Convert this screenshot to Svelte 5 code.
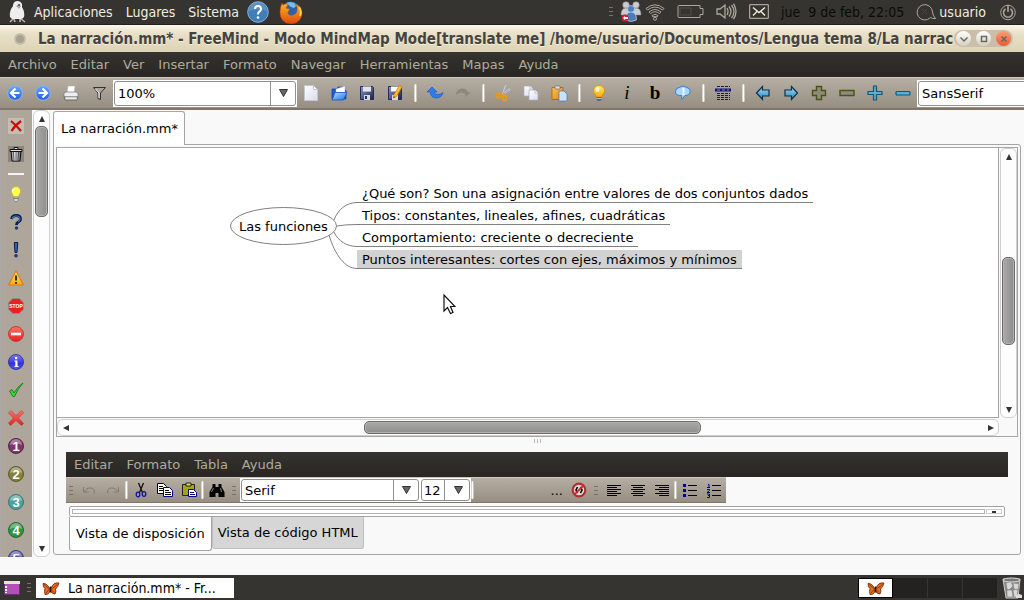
<script>
  const appMenus = ['Aplicaciones', 'Lugares', 'Sistema'];
  const menus = ['Archivo', 'Editar', 'Ver', 'Insertar', 'Formato', 'Navegar', 'Herramientas', 'Mapas', 'Ayuda'];
  const noteMenus = ['Editar', 'Formato', 'Tabla', 'Ayuda'];

  const navTools = [['back', 'Anterior'], ['forward', 'Siguiente'], ['print', 'Imprimir'], ['filter', 'Filtro']];
  const toolGroups = [
    [['file', 'Nuevo'], ['open', 'Abrir'], ['save', 'Guardar'], ['saveas', 'Guardar como']],
    [['undo', 'Deshacer'], ['redo', 'Rehacer']],
    [['cut', 'Cortar'], ['copy', 'Copiar'], ['paste', 'Pegar']],
    [['bulb', 'Idea'], ['italic', 'Cursiva'], ['bold', 'Negrita'], ['cloud', 'Nube']],
    [['grid', 'Atributos']],
    [['left', 'Izquierda'], ['right', 'Derecha'], ['plusGrey', 'Desplegar'], ['minusGrey', 'Plegar'], ['plusBlue', 'Desplegar todo'], ['minusBlue', 'Plegar todo']]
  ];
  const sideTop = [['remove', 'Quitar icono'], ['trash', 'Quitar todos']];
  const sideIcons = [
    ['lamp', 'Idea'], ['question', 'Pregunta'], ['exclaim', 'Importante'], ['warning', 'Aviso'], ['stop', 'Alto'],
    ['noentry', 'Prohibido'], ['info', 'Información'], ['check', 'Correcto'], ['cross', 'Incorrecto'],
    ['n1', 'Prioridad 1'], ['n2', 'Prioridad 2'], ['n3', 'Prioridad 3'], ['n4', 'Prioridad 4'], ['n5', 'Prioridad 5']
  ];
  const nodes = [
    { text: '¿Qué son? Son una asignación entre valores de dos conjuntos dados', y: 36 },
    { text: 'Tipos: constantes, lineales, afines, cuadráticas', y: 58 },
    { text: 'Comportamiento: creciente o decreciente', y: 80 },
    { text: 'Puntos interesantes: cortes con ejes, máximos y mínimos', y: 102 }
  ];
  let selected = $state(3);

  const ball = (n, c, d) =>
    `<circle cx="8" cy="8" r="7.5" fill="${c}" stroke="${d}"/><path d="M2 7a6 6 0 0 1 12 0q-6-3-12 0z" fill="#fff" opacity=".35"/><text x="8" y="12.5" text-anchor="middle" font-family="Liberation Sans" font-size="13" font-weight="bold" fill="#fff">${n}</text>`;
  const plus = 'M5.500 1.500h5v4h4v5h-4v4h-5v-4h-4v-5h4z';
  const rows = (list) => list.map(([x, w], i) => `<path d="M${x} ${3.5 + i * 2}h${w}" stroke="#000"/>`).join('');
  const sheet = (x, y) => `<path d="M${x} ${y}h6l3 3v7h-9z" fill="url(#paper)" stroke="#a9abc4" stroke-width=".7"/><path d="M${x + 6} ${y}v3h3" fill="#fff" stroke="#a9abc4" stroke-width=".7"/>`;

  const icons = {
    back: '<circle cx="8" cy="8" r="7.3" fill="url(#blue)" stroke="#8fb4ee"/><path d="M8.5 3.5 4 8l4.500 4.500M4.500 8h8" fill="none" stroke="#fff" stroke-width="2.200"/>',
    forward: '<circle cx="8" cy="8" r="7.3" fill="url(#blue)" stroke="#8fb4ee"/><path d="M7.500 3.500 12 8l-4.500 4.500M11.500 8h-8" fill="none" stroke="#fff" stroke-width="2.200"/>',
    print: '<path d="M5 1h7l-1 7H4z" fill="#fff" stroke="#bbb" stroke-width=".6"/><path d="M1 8l2-1h10l2 1v4H1z" fill="#eee" stroke="#777" stroke-width=".7"/><path d="M1 12h14l-1 3H2z" fill="#d7d7d7" stroke="#555" stroke-width=".7"/><path d="M3 13h10" stroke="#fff"/>',
    filter: '<path d="M2.500 2.500h12L9.500 8v6.500l-2.500-1V8z" fill="#aaa69e" stroke="#333"/><path d="M4.500 4L8 8v5" fill="none" stroke="#eee"/>',
    file: '<path d="M1.500.5h9l4 4v11h-13z" fill="url(#paper)" stroke="#c5c6d4"/><path d="M10.500.5v4h4z" fill="#fff" stroke="#c5c6d4"/>',
    open: '<path d="M1 4h5l1-2h5v3h3v9H1z" fill="#1c5ecb" stroke="#0d409d" stroke-width=".7"/><path d="M5 4l9-3v7H5z" fill="#fff" stroke="#9ab" stroke-width=".5"/><path d="M4 7.500h12L12.500 15H1z" fill="url(#sky)" stroke="#1554c4" stroke-width=".8"/>',
    save: '<path d="M1.500 1.500h12l1 1v12h-13z" fill="url(#navy)" stroke="#242c55"/><path d="M4 1.500h8v5H4z" fill="#fff"/><path d="M4 3h8M4 5h8" stroke="#bbb" stroke-width=".8"/><path d="M5 10h6v5H5z" fill="#d3d7e6"/><path d="M6 11h2v3H6z" fill="#243060"/>',
    saveas: '<path d="M1.500 1.500h12l1 1v12h-13z" fill="url(#navy)" stroke="#242c55"/><path d="M4 1.500h8v5H4z" fill="#fff"/><path d="M5 10h6v5H5z" fill="#d3d7e6"/><path d="M12.500.5l2.500 1.500-5.500 9.500-3 1.500.5-3.500z" fill="#ffb92c" stroke="#d8780b" stroke-width=".7"/><path d="M6.500 13l.3-1.700 1.200.7z" fill="#222"/>',
    undo: '<path d="M0 7l5-5 5 5H7q1 3 4 2.500 3 0 5-2-1 5.500-7 5.500-5 0-6-6z" fill="#2b7df0" stroke="#1754c6" stroke-width=".6"/>',
    redo: '<path d="M16 7.500L10.500 12V9.500Q6 6 1 10q0-6 6-6.500 5 0 6.500 4z" fill="#8d8880"/>',
    cut: '<path d="M11 .5L7.500 10M15 4L6 10.500" stroke="#c8cdd8" stroke-width="2"/><path d="M11.500 1L8 9.500M14.500 4.500L6 11" stroke="#777b88" stroke-width=".5"/><ellipse cx="4" cy="10.500" rx="3" ry="2" fill="none" stroke="#f09a0b" stroke-width="1.800"/><ellipse cx="9.500" cy="13" rx="2" ry="2.500" fill="none" stroke="#f09a0b" stroke-width="1.800"/>',
    copy: sheet(1, 1) + sheet(6, 5),
    paste: '<path d="M1 2.500h11v12H1z" fill="url(#orange)" stroke="#b15d05" stroke-width=".8"/><path d="M4 1h5v3H4z" fill="#ddd" stroke="#666" stroke-width=".6"/><path d="M8 6h5l3 3v7H8z" fill="#c9e3ff" stroke="#3c79c9" stroke-width=".7"/>',
    bulb: '<path d="M8 .5a5.300 5.300 0 0 1 5.500 5.300c0 2.400-2 3.200-2.500 6.200H5C4.500 9 2.500 8.200 2.500 5.800A5.300 5.300 0 0 1 8 .5z" fill="url(#gold)" stroke="#e08a00" stroke-width=".8"/><ellipse cx="6.500" cy="4.500" rx="2" ry="2.500" fill="#fff" opacity=".75"/><path d="M5.500 12h5v2.500l-1 1.500h-3l-1-1.500z" fill="#667"/><path d="M5.500 13.500h5" stroke="#ddd" stroke-width=".7"/>',
    italic: '<text x="8" y="14" text-anchor="middle" font-family="Liberation Serif" font-size="19" font-style="italic">i</text>',
    bold: '<text x="8" y="14" text-anchor="middle" font-family="Liberation Serif" font-size="19" font-weight="bold">b</text>',
    cloud: '<path d="M4 2.500q4-3 8 0 4 1 3 4 0 4-5 4l-3 4-.5-4Q0 11 .5 6 1 3 4 2.500z" fill="#a9d8ff" stroke="#3a7bd0"/><path d="M7.500 3h2v4.500h-2zM7.500 8.300h2V10h-2z" fill="#fff"/>',
    grid: '<path d="M2 1.500h13M2 8.500h13M2 10.500h13M2 12.500h13M2 14.500h13" stroke="#222" stroke-dasharray="3 1"/><path d="M0 3.500h16v3H0z" fill="#12128c"/><path d="M2 5h3M7 5h3M12 5h2" stroke="#88a"/>',
    left: '<path d="M1.500 8l6-6.500V5H14v6H7.500v3.500z" fill="url(#teal)" stroke="#0b2f4c" stroke-width="1.200"/>',
    right: '<path d="M14.500 8l-6-6.500V5H2v6h6.500v3.500z" fill="url(#teal)" stroke="#0b2f4c" stroke-width="1.200"/>',
    plusGrey: `<path d="${plus}" fill="#8d8c7c" stroke="#4c5212" stroke-width="1.400"/>`,
    minusGrey: '<path d="M1 5.500h14v5H1z" fill="#8d8c7c" stroke="#4c5212" stroke-width="1.400"/>',
    plusBlue: '<path d="M6.500 1h3v5.500H15v3H9.500V15h-3V9.500H1v-3h5.500z" fill="#5bb0d4" stroke="#12566f" stroke-width="1.200" stroke-linejoin="round"/>',
    minusBlue: '<rect x="1" y="6.500" width="14" height="3.500" rx="1" fill="#5bb0d4" stroke="#12566f" stroke-width="1.200"/>',
    remove: '<path d="M0 0h16v16H0z" fill="#c2bdb5"/><path d="M3 3q5 4 10 10M13 3Q7 7 3.500 13" fill="none" stroke="#d50000" stroke-width="2.200"/>',
    trash: '<path d="M0 0h16v16H0z" fill="#8b867c"/><path d="M3 5h10l-1 10H4z" fill="url(#metal)" stroke="#111"/><path d="M2 3.500h12v2H2zM6 3V1.500h4V3" fill="#ddd" stroke="#111"/><path d="M5.500 6l.5 8M8 6v8M10.500 6l-.5 8" stroke="#333" stroke-width=".8"/>',
    lamp: '<path d="M8 .5a4.700 4.700 0 0 1 4.700 4.700C12.700 7.500 11 8 10.500 11h-5C5 8 3.300 7.500 3.300 5.200A4.700 4.700 0 0 1 8 .5z" fill="#ffff54" stroke="#b5b13c" stroke-width=".8"/><path d="M6 2.500q-1.500 1-1.500 3" stroke="#fff" fill="none" stroke-width="1.500"/><path d="M5.800 11h4.400v3L9 15.500H7L5.800 14z" fill="#ddd" stroke="#777" stroke-width=".7"/><path d="M6 12.500h4" stroke="#666" stroke-width=".8"/>',
    question: '<path d="M3.500 5Q4 1.500 8.200 1.500T12.500 5Q12.500 7 10 8.200 8.500 9 8.500 11" fill="none" stroke="#0b1c4a" stroke-width="2.800"/><path d="M4 4.500Q5 2 8 2q4 0 4 3 0 1.500-2 3" fill="none" stroke="#3e70bb" stroke-width="1.200"/><circle cx="8.500" cy="14" r="1.700" fill="#183982"/>',
    exclaim: '<path d="M6.300.5h3.500l-.8 10H7z" fill="#3265ad" stroke="#0b1c4a"/><circle cx="8" cy="13.800" r="1.800" fill="#183982"/>',
    warning: '<path d="M8 1l7.500 14H.5z" fill="url(#gold)" stroke="#e27c18" stroke-width="1.200" stroke-linejoin="round"/><path d="M8 5.500v5M8 12v1.800" stroke="#222" stroke-width="1.800"/>',
    stop: '<path d="M4.800.5h6.400l4.300 4.300v6.400l-4.300 4.300H4.800L.5 11.200V4.800z" fill="#ec1f22" stroke="#8f8a86"/><text x="8" y="10" text-anchor="middle" font-family="Liberation Sans" font-size="5" font-weight="bold" fill="#fff">STOP</text>',
    noentry: '<circle cx="8" cy="8" r="7.500" fill="url(#red)" stroke="#c23c3c"/><path d="M3 6.700h10v2.600H3z" fill="#fff"/>',
    info: '<circle cx="8" cy="8" r="7.500" fill="url(#indigo)" stroke="#3a3a96"/><path d="M6.500 6.500h3V12h1v1h-4v-1h.8V7.500h-.8zM7 3h2.200v2.200H7z" fill="#fff"/>',
    check: '<path d="M1.500 9l2.500-1.500 2 3.500Q9.500 4.500 15 1 9.500 7 6.500 14.500H5z" fill="#39dc39" stroke="#187a18" stroke-width=".9"/>',
    cross: '<path d="M3 .5L8 5.500 13.500.5l2 2.500-5 5 5 5.500-2 2L8 10.500l-5.500 5L.5 13l5-5L.5 3z" fill="url(#red)" stroke="#9d4040" stroke-width=".6"/>',
    n1: ball(1, '#803567', '#53244a'),
    n2: ball(2, '#85803a', '#5d5a2c'),
    n3: ball(3, '#4da09f', '#3b7676'),
    n4: ball(4, '#2f9440', '#286a32'),
    n5: ball(5, '#5757ac', '#3f3f80'),
    eUndo: '<path d="M2.500 5v5h5M3 9.500q4-5 9-3 2.500 2 1 5" fill="none" stroke="#7f7a72"/>',
    eRedo: '<path d="M13.500 5v5h-5M13 9.500q-4-5-9-3-2.500 2-1 5" fill="none" stroke="#7f7a72"/>',
    eCut: '<path d="M5.500 1l4 9.500M10.500 1l-4 9.500" stroke="#111" stroke-width="1.300"/><ellipse cx="5" cy="12.500" rx="1.800" ry="2.300" fill="none" stroke="#1212a0" stroke-width="1.300"/><ellipse cx="11" cy="12" rx="1.800" ry="2.300" fill="none" stroke="#1212a0" stroke-width="1.300"/>',
    eCopy: '<path d="M.5 1.500h6l3 3v7h-9z" fill="#fff" stroke="#000"/><path d="M2 4.500h4M2 6.500h5M2 8.500h4" stroke="#000"/><path d="M6.500 5.500h6l3 3v6h-9z" fill="#fff" stroke="#00007c"/><path d="M8 8.500h4M8 10.500h6M8 12.500h6" stroke="#000"/>',
    ePaste: '<path d="M1.500 2.500h12v11h-12z" fill="#a8a216" stroke="#222"/><path d="M5 1h5v3H5z" fill="#e3df5d" stroke="#222"/><path d="M7.500 7.500h5l3 3v4h-8z" fill="#fff" stroke="#00007c"/><path d="M9 10.500h4M9 12.500h5" stroke="#00007c"/>',
    eFind: '<path d="M3.500 2h3v3h3V2h3v3l3 5v5h-6v-4h-3v4h-6v-5l3-5z" fill="#000"/><path d="M4.500 6L2.500 10M11.500 6l1 4" stroke="#aaa" stroke-width=".8"/>',
    eNone: '<circle cx="8" cy="8" r="6.300" fill="#ddd" stroke="#b92c30" stroke-width="2.200"/><path d="M6.500 5L5 8l1.500 3M9.500 5L11 8l-1.500 3" fill="none" stroke="#000" stroke-width="1.600"/><path d="M3.500 12.500l9-9" stroke="#d22c30" stroke-width="2"/>',
    alignL: rows([[1, 14], [1, 10], [1, 14], [1, 10], [1, 14], [1, 10]]),
    alignC: rows([[1, 14], [3, 10], [1, 14], [3, 10], [1, 14], [3, 10]]),
    alignR: rows([[1, 14], [5, 10], [1, 14], [5, 10], [1, 14], [5, 10]]),
    bullets: '<path d="M1 2h3v3H1zM1 7h3v3H1zM1 12h3v3H1z" fill="#00008c"/><path d="M6 3.500h9M6 8.500h9M6 13.500h9" stroke="#000"/>',
    numbers: '<path d="M2 2.500h1V5M1 5.500h3M1 7.500h2.500v1L1 10.500h3M1 12h2.500v3.500H1M2 13.500h2" fill="none" stroke="#00008c"/><path d="M6 3.500h9M6 8.500h9M6 13.500h9" stroke="#000"/>',
    butterfly: '<path d="M7 9Q4 3 0 3.500q0 4 2 5Q1 11 2 14.500q4 .5 5-4 2 3.500 5 3.500 1.500-2 .5-5Q15 7 16 3q-6-1-8 5.500z" fill="#ec6a1b" stroke="#5c2408" stroke-width=".8"/><path d="M1 4.500L6.500 9M14.500 4.500L8.500 9M3 13l3.500-4M11 12.500L8 9.500" stroke="#8b330a" stroke-width=".8"/><path d="M7.500 6.500v6" stroke="#29160c" stroke-width="1.500"/>'
  };
</script>

{#snippet icon(name)}
  <svg class="icon" viewBox="0 0 16 16" aria-hidden="true">{@html icons[name]}</svg>
{/snippet}

{#snippet tools(list)}
  {#each list as [name, label]}
    <button class="tool" aria-label={label}>{@render icon(name)}</button>
  {/each}
{/snippet}

{#snippet combo(label, value, kind)}
  <span class="combo {kind}">
    <select aria-label={label}><option>{value}</option></select>
    <svg class="drop" viewBox="0 0 9 8" aria-hidden="true"><path d="M.5.5h8L4.500 7.500z" fill="#666" stroke="#333" /></svg>
  </span>
{/snippet}

{#snippet grip()}<span class="grip"></span>{/snippet}

{#snippet arrow(dir)}
  <button class="arrow {dir}" aria-label="Desplazar"><svg viewBox="0 0 6 6" aria-hidden="true"><path d="M3 0l3 6H0z" fill="#333" /></svg></button>
{/snippet}

<svg class="defs" aria-hidden="true">
  <defs>
    <linearGradient id="paper" x2="1" y2="1"><stop stop-color="#fff" /><stop offset="1" stop-color="#d9dbea" /></linearGradient>
    <linearGradient id="blue" x2="0" y2="1"><stop stop-color="#6fa5ff" /><stop offset="1" stop-color="#1e5ee0" /></linearGradient>
    <linearGradient id="sky" x2="1" y2="1"><stop stop-color="#b9e0ff" /><stop offset="1" stop-color="#1c6ce8" /></linearGradient>
    <linearGradient id="navy" x2="1" y2="1"><stop stop-color="#8e9ac9" /><stop offset="1" stop-color="#182047" /></linearGradient>
    <linearGradient id="orange" x2="1" y2="1"><stop stop-color="#ffc356" /><stop offset="1" stop-color="#e58208" /></linearGradient>
    <linearGradient id="gold" x2="0" y2="1"><stop stop-color="#fff06a" /><stop offset="1" stop-color="#fba60e" /></linearGradient>
    <linearGradient id="teal" x2="0" y2="1"><stop stop-color="#a4e2fa" /><stop offset="1" stop-color="#1f84bb" /></linearGradient>
    <linearGradient id="metal"><stop stop-color="#777" /><stop offset=".4" stop-color="#fff" /><stop offset="1" stop-color="#555" /></linearGradient>
    <linearGradient id="red" x2="0" y2="1"><stop stop-color="#ff7468" /><stop offset="1" stop-color="#e81e1e" /></linearGradient>
    <linearGradient id="indigo" x2="0" y2="1"><stop stop-color="#8080f2" /><stop offset=".6" stop-color="#3030e4" /><stop offset="1" stop-color="#5b5bf8" /></linearGradient>
    <linearGradient id="fox" x2="0" y2="1"><stop stop-color="#ffb52c" /><stop offset="1" stop-color="#dc4a0b" /></linearGradient>
  </defs>
</svg>

<div class="desktop">
  <header class="panel">
    <svg class="logo" viewBox="0 0 18 22" aria-hidden="true"><path d="M5 5Q5 0 10 0q5 1 4 6 3 5 2 10l-2 2H4l-2-2Q1 10 5 5z" fill="#eee" /><path d="M8 5l3-2 2 2-2 3z" fill="#aaa" /><circle cx="11" cy="4" r="1" fill="#444" /><path d="M5 18l-3 3M6 18l1 3M12 18v3M13 18l4 3" stroke="#bbb" stroke-width="1.500" /></svg>
    <nav class="appmenus">{#each appMenus as m}<button>{m}</button>{/each}</nav>
    <button class="launcher" aria-label="Ayuda"><svg viewBox="0 0 22 22" aria-hidden="true"><circle cx="11" cy="11" r="10.300" fill="#417db8" stroke="#7fb0dd" /><path d="M2 10a9 9 0 0 1 18 0q-9-3-18 0z" fill="#fff" opacity=".15" /><path d="M8 8q0-3 3-3t3 3q0 1.500-1.700 2.700Q11 11.500 11 13.500" fill="none" stroke="#fff" stroke-width="2" /><circle cx="11" cy="16.500" r="1.300" fill="#fff" /></svg></button>
    <button class="launcher fox" aria-label="Firefox"><svg viewBox="0 0 24 24" aria-hidden="true"><circle cx="12" cy="11" r="9.500" fill="#2466ae" /><path d="M7 3q6-3 11 2l-3 3-3-1z" fill="#7ab9ec" /><path d="M3 3l1 2q3-2 5-1 0 2-2 4l4 1-2 3q0 4 5 3 4-1 4-5 1-3-2-6 6 2 7 8 0 11-11 12Q1 23 1 12q0-5 2-9z" fill="url(#fox)" stroke="#b93c06" stroke-width=".5" /><path d="M20 7q3 4 1 9" stroke="#ffd24a" stroke-width="2" fill="none" /></svg></button>
    <div class="tray">
      <span class="pair">
        {@render grip()}
        <svg width="22" height="22" viewBox="0 0 22 22" aria-hidden="true"><g fill="#c9ccd0" stroke="#888" stroke-width=".6"><circle cx="6" cy="4" r="3.300" /><path d="M1 14q0-7 5-7t5 7z" /><circle cx="16" cy="4" r="3.300" /><path d="M11 14q0-7 5-7t5 7z" /></g><g fill="#4c7dbb" stroke="#dce6f2" stroke-width=".6"><circle cx="11" cy="8" r="3.500" /><path d="M5.500 19q0-8 5.500-8t5.500 8q-5 3-11 0z" /></g><circle cx="5" cy="17" r="3.500" fill="#d11f35" /><path d="M3 17l2-2v4zM5 16h3v2H5z" fill="#fff" /></svg>
        <svg width="20" height="18" viewBox="0 0 20 18" fill="none" stroke="#aaa79b" aria-hidden="true"><path d="M1 5.500Q10-2 19 5.500L17.500 7Q10 1 2.500 7zM4 9q6-5 12 0l-1.500 1.500q-4.500-3.500-9 0zM7 12.500q3-2.500 6 0l-1 1.500q-2-1-4 0z" /><circle cx="10" cy="15.800" r="1.500" /></svg>
      </span>
      <svg width="27" height="15" viewBox="0 0 27 15" fill="none" stroke="#aaa79b" aria-hidden="true"><path d="M2 1.500h21v3h3v6h-3v3H2q-1 0-1-1v-10q0-1 1-1z" /><path d="M3 4h11v7H3z" stroke="#504e48" /></svg>
      <svg width="21" height="17" viewBox="0 0 21 17" fill="none" stroke="#aaa79b" aria-hidden="true"><path d="M1 6h3l5-4v13l-5-4H1zM11 5q2 3.500 0 7M13 3.500q4 5 0 10M15.500 2q5 6.500 0 13M17.500.7q5 8 0 15.500" stroke-width="1.300" /></svg>
      <svg width="20" height="15" viewBox="0 0 20 15" fill="none" stroke="#c2bfb2" aria-hidden="true"><path d="M.7.700h18.600v13.600H.7z" /><path d="M4 3.500l6 5 6-5M4 11.500l4-4M16 11.500l-4-4" stroke="#eeeadc" stroke-width="1.400" /></svg>
      <time>jue  9 de feb, 22:05</time>
      <span class="pair user">
        <svg width="20" height="18" viewBox="0 0 20 18" fill="none" stroke="#aaa79b" aria-hidden="true"><path d="M14.500 14.500A7.700 7.700 0 1 1 16.500 9q0 3 3 6.500-3 .5-5-1z" /><path d="M6 6l5 5M11 6l-5 5" stroke="#555" stroke-dasharray="1 1" /></svg>
        <button>usuario</button>
      </span>
      <button class="power" aria-label="Apagar"><svg width="16" height="18" viewBox="0 0 16 18" fill="none" stroke="#aaa79b" aria-hidden="true"><circle cx="8" cy="9.500" r="7.300" /><path d="M5.500 6a4.500 4.500 0 1 0 5 0M8 2v7" stroke-width="1.600" /></svg></button>
    </div>
  </header>

  <div class="title">
    <span class="dot"></span>
    <h1>La narración.mm* - FreeMind - Modo MindMap Mode[translate me] /home/usuario/Documentos/Lengua tema 8/La narrac</h1>
    <div class="wbuttons">
      <button aria-label="Minimizar"><svg viewBox="0 0 10 10" aria-hidden="true"><path d="M1.500 3.500L5 7l3.500-3.500" /></svg></button>
      <button aria-label="Maximizar"><svg viewBox="0 0 10 10" aria-hidden="true"><path d="M2.500 2.500h5v5h-5z" /></svg></button>
      <button class="close" aria-label="Cerrar"><svg viewBox="0 0 10 10" aria-hidden="true"><path d="M2.500 2.500l5 5M7.500 2.500l-5 5" /></svg></button>
    </div>
  </div>

  <nav class="menubar">{#each menus as m}<button>{m}</button>{/each}</nav>

  <div class="toolbar">
    {@render tools(navTools)}
    {@render combo('Zoom', '100%', 'zoom')}
    {#each toolGroups as group, i}
      {#if i}<span class="sep"></span>{/if}
      {@render tools(group)}
    {/each}
    {@render combo('Fuente', 'SansSerif', 'font')}
  </div>

  <main class="work">
    <aside class="sidebar">
      {@render tools(sideTop)}
      <span class="hsep"></span>
      {@render tools(sideIcons)}
    </aside>
    <div class="vscroll side">
      {@render arrow('up')}
      <div class="track"><span class="thumb"></span></div>
      {@render arrow('down')}
    </div>

    <section class="content">
      <button class="doctab">La narración.mm*</button>
      <div class="pane">
        <div class="view">
          <div class="canvas">
            <svg class="edges" width="760" height="130" viewBox="0 0 760 130" fill="none" stroke="#808080" aria-hidden="true">
              <ellipse cx="226.500" cy="78" rx="53" ry="18.500" />
              <path d="M277 72C281 61 290 54.500 300 54.500M280 78Q288 76.500 300 76.500M277 84C281 93 290 98.500 300 98.500M272 87C278 107 288 120.500 300 120.500" />
            </svg>
            <span class="rootnode">Las funciones</span>
            {#each nodes as n, i}
              <button class="node" class:selected={selected === i} style:top="{n.y}px" onclick={() => (selected = i)}>{n.text}</button>
            {/each}
            <svg class="pointer" width="13" height="21" viewBox="0 0 13 21" aria-hidden="true"><path d="M1 1v16l3.500-3.500 3 6 2.500-1-2.500-6H12z" fill="#fff" stroke="#111" stroke-width="1.200" /></svg>
          </div>
          <div class="vscroll map">
            {@render arrow('up')}
            <div class="track"><span class="thumb"></span></div>
            {@render arrow('down')}
          </div>
          <div class="hscroll">
            {@render arrow('prev')}
            <div class="track"><span class="thumb"></span></div>
            {@render arrow('next')}
          </div>
        </div>
        <div class="splitter"><i></i><i></i><i></i></div>

        <div class="editor">
          <nav class="menubar">{#each noteMenus as m}<button>{m}</button>{/each}</nav>
          <div class="toolbar small">
            {@render grip()}
            {@render tools([['eUndo', 'Deshacer'], ['eRedo', 'Rehacer']])}
            <span class="sep"></span>
            {@render tools([['eCut', 'Cortar'], ['eCopy', 'Copiar'], ['ePaste', 'Pegar']])}
            <span class="sep"></span>
            {@render tools([['eFind', 'Buscar']])}
            {@render grip()}
            {@render combo('Tipo de letra', 'Serif', 'face')}
            {@render combo('Tamaño', '12', 'size')}
            <span class="sep"></span>
            <button class="more">...</button>
            {@render tools([['eNone', 'Sin enlace']])}
            {@render grip()}
            {@render tools([['alignL', 'Izquierda'], ['alignC', 'Centro'], ['alignR', 'Derecha']])}
            <span class="sep"></span>
            {@render tools([['bullets', 'Viñetas'], ['numbers', 'Numeración']])}
          </div>
          <div class="strip"><span></span><b></b></div>
          <div class="viewtabs">
            <button class="on">Vista de disposición</button>
            <button>Vista de código HTML</button>
          </div>
        </div>
      </div>
    </section>
  </main>

  <footer class="taskbar">
    <button class="show" aria-label="Mostrar el escritorio"><svg width="16" height="16" viewBox="0 0 16 16" aria-hidden="true"><path d="M.5 1.500h15v13H.5z" fill="#b34fb5" stroke="#6e2c72" /><path d="M0 1h16v3H0z" fill="#e8e4d4" /><path d="M2 6v7" stroke="#fff" stroke-width="2" stroke-dasharray="2 1" /></svg></button>
    {@render grip()}
    <button class="task">{@render icon('butterfly')}<span>La narración.mm* - Fr...</span></button>
    <div class="pager">
      <button class="current" aria-label="Área 1">{@render icon('butterfly')}</button>
      <button aria-label="Área 2"></button>
      <button aria-label="Área 3"></button>
      <button aria-label="Área 4"></button>
    </div>
    <button class="bin" aria-label="Papelera"><svg width="20" height="22" viewBox="0 0 20 22" aria-hidden="true"><path d="M1 2h17l-2 19H4z" fill="#888" stroke="#ccc" /><path d="M4 6l5-1 2 4-4 4-2-1zM11 6l6 1-1 6-4-1zM5 13l5 0 1 7H5zM11 13l5-1-1 8-3 0z" fill="#d8d8d8" stroke="#777" stroke-width=".5" /><ellipse cx="9.500" cy="3" rx="8.500" ry="2" fill="#777" stroke="#ddd" /><path d="M14 18l3-1 3 1v3h-6z" fill="#ddd" /></svg></button>
  </footer>
</div>

<style>
  :global(body) {
    margin: 0;
  }
  .desktop {
    display: flex;
    flex-direction: column;
    height: 100vh;
    overflow: hidden;
    background: #f9f9f9;
    font-family: 'DejaVu Sans', sans-serif;
    font-size: 13px;
    color: #000;
  }
  .defs {
    position: absolute;
    width: 0;
    height: 0;
  }
  button {
    margin: 0;
    padding: 0;
    border: 0;
    background: none;
    color: inherit;
    font: inherit;
    white-space: nowrap;
  }
  svg {
    display: block;
    flex: none;
  }
  .icon {
    width: 16px;
    height: 16px;
    overflow: visible;
  }

  .panel {
    display: flex;
    align-items: center;
    flex: none;
    box-sizing: border-box;
    height: 25px;
    padding: 0 8px 1px;
    border-bottom: 1px solid #23211f;
    background: #353430;
    color: #f0ede0;
    font-family: 'DejaVu Sans Condensed', sans-serif;
    font-size: 14px;
    line-height: 16px;
  }
  .logo {
    width: 18px;
    height: 22px;
  }
  .appmenus {
    display: flex;
    gap: 13px;
    margin: 0 8px;
  }
  .launcher svg {
    width: 22px;
    height: 22px;
  }
  .fox {
    margin-left: 10px;
  }
  .fox svg {
    width: 24px;
    height: 24px;
  }
  .tray {
    display: flex;
    align-items: center;
    gap: 12px;
    margin-left: auto;
  }
  .pair {
    display: flex;
    align-items: center;
    gap: 3px;
  }
  .user {
    padding-right: 2px;
  }
  time {
    color: #0b0b0a;
    white-space: pre;
  }

  .title {
    display: flex;
    align-items: center;
    flex: none;
    height: 27px;
    padding: 0 11px 0 14px;
    background: linear-gradient(#fbf8ec, #e9e1c8 30%, #ddd4b6);
  }
  .dot {
    flex: none;
    width: 8px;
    height: 8px;
    border: 2px solid #c6bea8;
    border-radius: 50%;
    background: #a7a193;
  }
  h1 {
    flex: 1;
    min-width: 0;
    margin: 0 0 0 12px;
    overflow: hidden;
    color: #45433f;
    font-family: 'DejaVu Sans Condensed', sans-serif;
    font-size: 15px;
    font-weight: bold;
    white-space: nowrap;
    text-shadow: 0 1px #f6f1de;
  }
  .wbuttons {
    display: flex;
    gap: 5px;
    padding: 1px 2px;
    border-radius: 10px;
    background: #c9bfa9;
  }
  .wbuttons button {
    display: grid;
    place-items: center;
    width: 15px;
    height: 15px;
    border-radius: 50%;
    background: linear-gradient(#fff, #d5cec0);
  }
  .wbuttons svg {
    width: 10px;
    height: 10px;
    fill: none;
    stroke: #6e675b;
    stroke-width: 1.5;
  }
  .wbuttons .close {
    background: linear-gradient(#ff9d78, #e95a2e);
  }

  .menubar {
    display: flex;
    align-items: center;
    gap: 14px;
    flex: none;
    height: 25px;
    padding: 0 8px;
    background: linear-gradient(#353430, #282523);
    color: #aeab9d;
  }

  .toolbar {
    display: flex;
    align-items: center;
    flex: none;
    height: 30px;
    padding-left: 1px;
    overflow: hidden;
    border-top: 1px solid #cbc5bc;
    border-bottom: 2px solid #80776a;
    background: linear-gradient(#b5aea3, #978e81);
  }
  .tool {
    display: grid;
    place-items: center;
    flex: none;
    width: 28px;
    height: 28px;
  }
  .sep {
    flex: none;
    width: 3px;
    height: 18px;
    margin: 0 4px 0 5px;
    border-radius: 2px;
    background: linear-gradient(90deg, #c8c2b8, #fff, #b0a99e);
  }
  .combo {
    display: grid;
    grid-template-columns: 1fr 26px;
    align-items: center;
    flex: none;
    box-sizing: border-box;
    height: 27px;
    padding: 1px;
    background: #fff;
  }
  .combo select {
    grid-area: 1 / 1 / 2 / 3;
    width: 100%;
    height: 25px;
    padding: 0 3px;
    border: 1px solid #92908c;
    border-radius: 3px;
    outline: 0;
    background: linear-gradient(90deg, transparent calc(100% - 25px), #92908c calc(100% - 25px), #92908c calc(100% - 24px), transparent calc(100% - 24px));
    color: #000;
    font: inherit;
    appearance: none;
  }
  .drop {
    grid-area: 1 / 2;
    justify-self: center;
    width: 9px;
    height: 8px;
    pointer-events: none;
  }
  .zoom {
    width: 184px;
  }
  .font {
    width: 184px;
  }

  .work {
    display: flex;
    flex: 1;
    min-height: 0;
    padding-bottom: 18px;
  }
  .sidebar {
    display: flex;
    flex-direction: column;
    align-items: center;
    flex: none;
    width: 32px;
    padding-top: 2px;
    overflow: hidden;
    background: #aea69a;
    box-shadow: inset 1px 0 #aaa;
  }
  .hsep {
    flex: none;
    width: 16px;
    height: 2px;
    margin: 5px 0;
    background: #f5f3f0;
  }

  .vscroll,
  .hscroll {
    display: flex;
    box-sizing: border-box;
    border: 1px solid #cfcfcf;
    border-radius: 6px;
    background: #fdfdfd;
  }
  .vscroll {
    flex-direction: column;
    width: 17px;
  }
  .side {
    margin: 0 3px 0 1px;
  }
  .track {
    flex: 1;
    display: flex;
    min-width: 0;
    min-height: 0;
  }
  .vscroll .track {
    flex-direction: column;
    padding: 0 1px;
  }
  .hscroll .track {
    padding: 1px 0;
  }
  .thumb {
    box-sizing: border-box;
    border: 1px solid #6f6b60;
    border-radius: 5px;
    background: linear-gradient(90deg, #a9a9a9, #8e8e8e);
    box-shadow: inset 0 0 0 1px #b2b2b2;
  }
  .side .thumb {
    height: 22%;
  }
  .map .thumb {
    height: 37%;
    margin-top: 93px;
  }
  .hscroll .thumb {
    width: 37%;
    margin-left: 32%;
    background: linear-gradient(#a9a9a9, #8e8e8e);
  }
  .arrow {
    display: grid;
    place-items: center;
    flex: none;
    width: 15px;
    height: 15px;
  }
  .arrow svg {
    width: 6px;
    height: 6px;
  }
  .down svg {
    transform: rotate(180deg);
  }
  .prev svg {
    transform: rotate(-90deg);
  }
  .next svg {
    transform: rotate(90deg);
  }

  .content {
    display: flex;
    flex-direction: column;
    flex: 1;
    min-width: 0;
    padding: 1px 3px 2px 0;
  }
  .doctab {
    align-self: flex-start;
    z-index: 1;
    height: 34px;
    margin-bottom: -1px;
    padding: 0 6px 0 7px;
    border: 1px solid #a5a5a5;
    border-bottom: 0;
    border-radius: 3px 3px 0 0;
    background: #fff;
  }
  .pane {
    display: flex;
    flex-direction: column;
    flex: 1;
    min-height: 0;
    padding: 2px;
    border: 1px solid #a5a5a5;
    border-radius: 0 3px 3px 3px;
  }
  .view {
    display: grid;
    grid-template-columns: 1fr 17px;
    grid-template-rows: 1fr 17px;
    gap: 1px;
    flex: 1;
    min-height: 0;
    border: 1px solid #a5a5a5;
  }
  .canvas {
    position: relative;
    min-width: 0;
    overflow: hidden;
    border-right: 1px solid #a5a5a5;
    border-bottom: 1px solid #a5a5a5;
    background: #fff;
  }
  .edges {
    position: absolute;
    top: 0;
    left: 0;
  }
  .rootnode {
    position: absolute;
    top: 71px;
    left: 182px;
    line-height: 16px;
  }
  .node {
    position: absolute;
    left: 300px;
    height: 19px;
    padding: 1px 5px 0;
    border-bottom: 1px solid #808080;
    line-height: 18px;
  }
  .selected {
    background: #d2d2d2;
  }
  .pointer {
    position: absolute;
    top: 146px;
    left: 386px;
  }
  .splitter {
    display: flex;
    justify-content: center;
    gap: 2px;
    flex: none;
    height: 13px;
    padding-top: 2px;
  }
  .splitter i {
    width: 1px;
    height: 4px;
    background: #bbb;
  }

  .editor {
    flex: none;
    padding: 0 10px 1px;
  }
  .small {
    width: fit-content;
    max-width: 100%;
    height: 24px;
    padding: 0;
    border-bottom-width: 1px;
  }
  .small .tool {
    width: 24px;
    height: 24px;
  }
  .small .sep {
    margin: 0 1px 0 0;
  }
  .small .combo {
    height: 24px;
  }
  .small select {
    height: 22px;
  }
  .face {
    width: 180px;
  }
  .size {
    width: 51px;
  }
  .size select {
    padding: 0 2px;
  }
  .small .size {
    grid-template-columns: 1fr 24px;
  }
  .more {
    flex: none;
    width: 92px;
    padding-right: 4px;
    text-align: right;
  }
  .grip {
    flex: none;
    width: 4px;
    height: 9px;
    margin: 0 4px 0 3px;
    background: repeating-linear-gradient(#77716a 0 1px, transparent 1px 4px);
  }
  .strip {
    display: flex;
    height: 5px;
    margin: 3px 3px 0;
    padding: 2px;
    border: 1px solid #a5a5a5;
    border-radius: 2px;
    background: #fff;
  }
  .strip span {
    flex: 1;
    border: 1px solid #b2b2b2;
  }
  .strip b {
    width: 14px;
    margin-left: 1px;
    border: 1px solid #ccc;
    background: linear-gradient(#333, #333) center / 4px 2px no-repeat;
  }
  .viewtabs {
    display: flex;
    align-items: flex-start;
    padding-left: 3px;
  }
  .viewtabs button {
    height: 32px;
    padding: 0 5px;
    border: 1px solid #c0c0c0;
    border-top: 0;
    border-radius: 0 0 3px 3px;
    background: #d6d6d6;
  }
  .viewtabs .on {
    height: 34px;
    padding: 0 6px;
    border-color: #a5a5a5;
    background: #fff;
  }

  .taskbar {
    display: flex;
    align-items: center;
    flex: none;
    height: 25px;
    padding: 0 2px 0 4px;
    background: #353430;
  }
  .taskbar .grip {
    margin: 0 5px 0 7px;
  }
  .task {
    display: flex;
    align-items: center;
    gap: 9px;
    box-sizing: border-box;
    width: 198px;
    height: 20px;
    padding: 0 7px;
    background: #fff;
    font-family: 'DejaVu Sans Condensed', sans-serif;
    font-size: 14px;
  }
  .pager {
    display: flex;
    margin-left: auto;
    border-radius: 2px;
    background: #232220;
  }
  .pager button {
    display: grid;
    place-items: center;
    box-sizing: border-box;
    width: 35px;
    height: 20px;
    border-right: 1px solid #353430;
  }
  .pager .current {
    border: 1px solid #000;
    background: #fff;
  }
  .bin {
    margin-left: 4px;
  }
</style>
